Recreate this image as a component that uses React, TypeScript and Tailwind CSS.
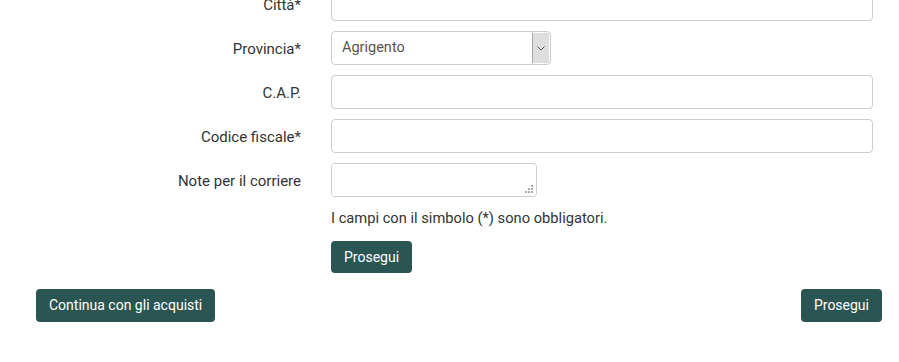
const font = { fontFamily: "Roboto, 'Liberation Sans', sans-serif" };

const Label = ({ text }: { text: string }) => (
  <label className="flex h-[34px] items-center justify-end pt-[2px] text-[15px] text-[#333]">{text}</label>
);

const TextInput = () => (
  <input
    type="text"
    className="h-[34px] w-full rounded-[4px] border border-[#ccc] bg-white px-3 text-[14px] text-[#555] outline-none"
  />
);

const ProvinciaSelect = () => (
  <div className="flex h-[34px] w-[220px] overflow-hidden rounded-[4px] border border-[#ccc] bg-white">
    <select className="h-full flex-1 appearance-none bg-transparent pl-[10px] text-[14.5px] text-[#555] outline-none">
      <option>Agrigento</option>
    </select>
    <span className="my-px mr-px flex w-[17px] items-center justify-center border-l border-[#a8a8a8] bg-[#dedede]">
      <svg width="8" height="5" viewBox="0 0 8 5">
        <path d="M0.5 0.5 L4 4 L7.5 0.5" fill="none" stroke="#555" strokeWidth="1" />
      </svg>
    </span>
  </div>
);

const NoteArea = () => (
  <div className="relative h-[34px] w-[206px]">
    <textarea className="h-full w-full resize-none rounded-[4px] border border-[#ccc] bg-white px-3 py-1.5 text-[14px] outline-none" />
    <svg className="absolute bottom-[4px] right-[4px]" width="8" height="8" viewBox="0 0 8 8">
      <rect x="6" y="0" width="2" height="2" fill="#aaa" />
      <rect x="3" y="3" width="2" height="2" fill="#aaa" />
      <rect x="6" y="3" width="2" height="2" fill="#aaa" />
      <rect x="0" y="6" width="2" height="2" fill="#aaa" />
      <rect x="3" y="6" width="2" height="2" fill="#aaa" />
      <rect x="6" y="6" width="2" height="2" fill="#aaa" />
    </svg>
  </div>
);

const Button = ({ text }: { text: string }) => (
  <button className="h-[33px] rounded-[4px] bg-[#2b5553] px-[13px] text-[14px] text-white">{text}</button>
);

export default function App() {
  return (
    <div className="h-[362px] w-[899px] overflow-hidden bg-white" style={font}>
      <div className="mt-[-13px] grid grid-cols-[301px_1fr] gap-x-[30px] gap-y-[10px] pr-[26px]">
        <Label text="Città*" />
        <TextInput />
        <Label text="Provincia*" />
        <ProvinciaSelect />
        <Label text="C.A.P." />
        <TextInput />
        <Label text="Codice fiscale*" />
        <TextInput />
        <Label text="Note per il corriere" />
        <NoteArea />
        <div />
        <p className="mt-px text-[14.7px] leading-5 text-[#333]">I campi con il simbolo (*) sono obbligatori.</p>
        <div />
        <div className="mt-[3px]">
          <button className="h-[32px] rounded-[4px] bg-[#2b5553] px-[13px] text-[14px] text-white">Prosegui</button>
        </div>
      </div>
      <div className="mt-[16px] flex items-center justify-between pl-[36px] pr-[17px]">
        <Button text="Continua con gli acquisti" />
        <Button text="Prosegui" />
      </div>
    </div>
  );
}
